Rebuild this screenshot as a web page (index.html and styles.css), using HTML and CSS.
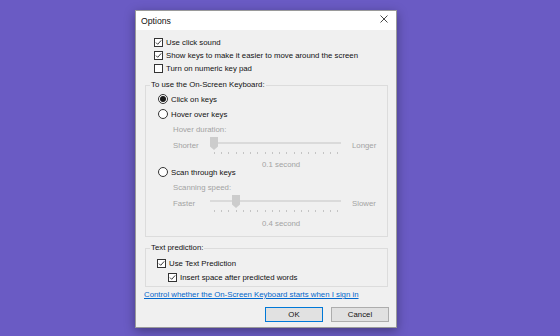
FILE: index.html
```html
<!DOCTYPE html>
<html>
<head>
<meta charset="utf-8">
<link rel="stylesheet" href="styles.css">
</head>
<body>
<div class="dialog">
  <div class="titlebar">
    <span class="title">Options</span>
    <span class="close"><svg width="8" height="8" viewBox="0 0 8 8"><path d="M0.5 0.5 L7.5 7.5 M7.5 0.5 L0.5 7.5" stroke="#333" stroke-width="0.9" fill="none"/></svg></span>
  </div>
  <div class="client">
    <div class="checks">
      <div class="crow"><span class="cb"><svg viewBox="0 0 7 7"><path d="M1 3.6 L2.7 5.3 L6.2 1.4" stroke="#222" stroke-width="0.9" fill="none"/></svg></span><span>Use click sound</span></div>
      <div class="crow"><span class="cb"><svg viewBox="0 0 7 7"><path d="M1 3.6 L2.7 5.3 L6.2 1.4" stroke="#222" stroke-width="0.9" fill="none"/></svg></span><span>Show keys to make it easier to move around the screen</span></div>
      <div class="crow"><span class="cb"></span><span>Turn on numeric key pad</span></div>
    </div>

    <fieldset class="group g1">
      <legend>To use the On-Screen Keyboard:</legend>
      <div class="rrow r1"><span class="radio on"></span><span>Click on keys</span></div>
      <div class="rrow r2"><span class="radio"></span><span>Hover over keys</span></div>
      <div class="sub">
        <div class="sub-label">Hover duration:</div>
        <div class="slider">
          <span class="side">Shorter</span>
          <div class="track-area">
            <div class="track"></div>
            <div class="ticks"><span></span><span></span><span></span><span></span><span></span><span></span><span></span><span></span><span></span><span></span><span></span><span></span><span></span><span></span><span></span><span></span><span></span><span></span></div>
            <svg class="thumb" style="left:0px" width="8" height="13" viewBox="0 0 8 13"><polygon points="0,0 8,0 8,9.5 4,13 0,9.5" fill="#cccccc"/></svg>
          </div>
          <span class="side side-r">Longer</span>
        </div>
        <div class="value value-tight">0.1 second</div>
      </div>
      <div class="rrow r3"><span class="radio"></span><span>Scan through keys</span></div>
      <div class="sub">
        <div class="sub-label second">Scanning speed:</div>
        <div class="slider">
          <span class="side">Faster</span>
          <div class="track-area">
            <div class="track"></div>
            <div class="ticks"><span></span><span></span><span></span><span></span><span></span><span></span><span></span><span></span><span></span><span></span><span></span><span></span><span></span><span></span><span></span><span></span><span></span><span></span></div>
            <svg class="thumb" style="left:22px" width="8" height="13" viewBox="0 0 8 13"><polygon points="0,0 8,0 8,9.5 4,13 0,9.5" fill="#cccccc"/></svg>
          </div>
          <span class="side side-r">Slower</span>
        </div>
        <div class="value">0.4 second</div>
      </div>
    </fieldset>

    <fieldset class="group g2">
      <legend>Text prediction:</legend>
      <div class="crow tp1"><span class="cb"><svg viewBox="0 0 7 7"><path d="M1 3.6 L2.7 5.3 L6.2 1.4" stroke="#222" stroke-width="0.9" fill="none"/></svg></span><span>Use Text Prediction</span></div>
      <div class="crow tp2"><span class="cb"><svg viewBox="0 0 7 7"><path d="M1 3.6 L2.7 5.3 L6.2 1.4" stroke="#222" stroke-width="0.9" fill="none"/></svg></span><span>Insert space after predicted words</span></div>
    </fieldset>

    <div class="link">Control whether the On-Screen Keyboard starts when I sign in</div>

    <div class="buttons">
      <div class="btn default">OK</div>
      <div class="btn">Cancel</div>
    </div>
  </div>
</div>
</body>
</html>
```

FILE: styles.css
```css
html, body {
  margin: 0;
  height: 100%;
}
body {
  background: #6a5bc4;
  font-family: "Liberation Sans", Arial, sans-serif;
  font-size: 7.8px;
  color: #111;
  padding: 10px 0 0 135px;
  box-sizing: border-box;
  overflow: hidden;
}
.dialog {
  width: 262px;
  box-sizing: border-box;
  border: 1px solid #9a9a9a;
  background: #f0f0f0;
  box-shadow: 0 3px 10px rgba(0, 0, 0, 0.35);
}
.titlebar {
  height: 19px;
  background: #fff;
  display: flex;
  align-items: center;
  justify-content: space-between;
}
.title {
  font-size: 8.7px;
  margin-left: 5px;
}
.close {
  width: 24px;
  height: 8px;
  display: flex;
  justify-content: center;
  margin-bottom: 3px;
}
.client {
  padding: 6px 0 5px;
}
.checks {
  padding-left: 18px;
}
.crow {
  height: 13px;
  display: flex;
  align-items: center;
  gap: 3px;
  white-space: nowrap;
}
.cb {
  width: 9px;
  height: 9px;
  box-sizing: border-box;
  border: 1px solid #333;
  background: #fff;
  display: flex;
  flex: none;
}
.cb svg {
  width: 7px;
  height: 7px;
}
fieldset.group {
  margin: 5px 8px 0 9px;
  padding: 2px 0 7px;
  border: 1px solid #dcdcdc;
  min-width: 0;
}
legend {
  margin-left: 4px;
  padding: 0 1px;
  line-height: 10px;
  height: 10px;
}
fieldset.g2 {
  margin-top: 6px;
  padding: 3px 0 2px;
}
.rrow {
  display: flex;
  align-items: center;
  gap: 3px;
  margin-left: 12px;
  white-space: nowrap;
}
.r1 { height: 14px; }
.r2 { height: 16px; }
.r3 { height: 12px; }
.radio {
  width: 10px;
  height: 10px;
  box-sizing: border-box;
  border: 1px solid #333;
  border-radius: 50%;
  background: #fff;
  display: flex;
  align-items: center;
  justify-content: center;
  flex: none;
}
.radio.on::after {
  content: "";
  width: 6px;
  height: 6px;
  border-radius: 50%;
  background: #1a1a1a;
}
.sub {
  margin-left: 27px;
  color: #a3a3a3;
  white-space: nowrap;
}
.sub-label {
  margin-top: 1px;
  height: 14px;
  line-height: 14px;
}
.sub-label.second {
  margin-top: 3px;
}
.slider {
  display: flex;
  height: 20px;
}
.side {
  width: 37px;
  line-height: 13px;
  margin-top: 2px;
}
.side-r {
  width: auto;
  margin-left: 11px;
}
.track-area {
  width: 131px;
  position: relative;
  flex: none;
}
.track {
  margin-top: 5px;
  height: 2px;
  background: #dadada;
}
.ticks {
  margin-top: 8px;
  height: 2px;
  display: flex;
  justify-content: space-between;
  padding: 0 3px 0 4px;
}
.ticks span {
  width: 1px;
  height: 2px;
  background: #c4c4c4;
}
.thumb {
  position: absolute;
  top: 0;
}
.value {
  margin: 4px 0 0 89px;
  height: 10px;
  line-height: 10px;
}
.value-tight {
  margin-top: 3px;
  margin-bottom: -4px;
}
.tp1 {
  margin-left: 11px;
  height: 14px;
}
.tp2 {
  margin-left: 22px;
  height: 14px;
}
.link {
  margin: 2px 0 0 8px;
  height: 12px;
  line-height: 12px;
  color: #0066cc;
  text-decoration: underline;
  white-space: nowrap;
}
.buttons {
  margin-top: 6px;
  display: flex;
  justify-content: flex-end;
  gap: 8px;
  padding-right: 7px;
}
.btn {
  width: 58px;
  height: 15px;
  box-sizing: border-box;
  border: 1px solid #adadad;
  background: #e1e1e1;
  display: flex;
  align-items: center;
  justify-content: center;
}
.btn.default {
  border-color: #0078d7;
}
```
